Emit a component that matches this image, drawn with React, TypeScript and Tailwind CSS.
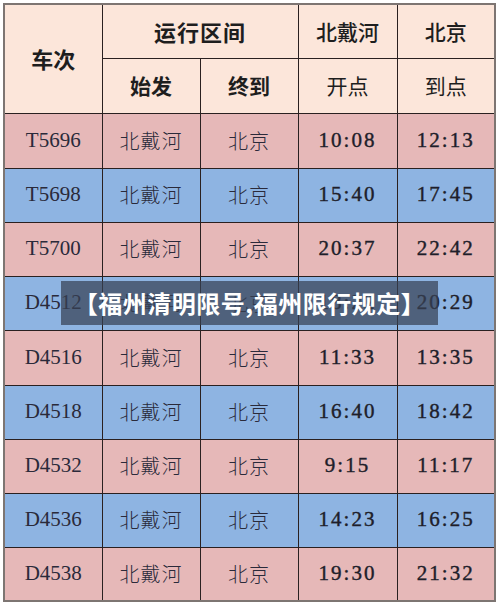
import React from "react";

const rows = [
  ["T5696", "10:08", "12:13"],
  ["T5698", "15:40", "17:45"],
  ["T5700", "20:37", "22:42"],
  ["D4512", "18:22", "20:29"],
  ["D4516", "11:33", "13:35"],
  ["D4518", "16:40", "18:42"],
  ["D4532", "9:15", "11:17"],
  ["D4536", "14:23", "16:25"],
  ["D4538", "19:30", "21:32"],
];

const sans = "font-['Noto_Sans_CJK_SC','Noto_Sans',sans-serif]";
const serif = "font-['Liberation_Serif','Noto_Sans_CJK_SC',serif]";

export default function App() {
  return (
    <div className="relative w-[500px] h-[607px] bg-white pt-[3px] pl-[3px]">
      <table className="w-[491px] table-fixed border-collapse border-2 border-[#7d7572] text-[#1e1e1e]">
        <colgroup>
          <col className="w-[98px]" />
          <col className="w-[98px]" />
          <col className="w-[98px]" />
          <col className="w-[99px]" />
          <col className="w-[98px]" />
        </colgroup>
        <thead>
          <tr className="h-[54px] bg-[#fce6da]">
            <th rowSpan={2} className={`border-[1.5px] border-[#2a2020] ${sans} font-bold text-[22px]`}>车次</th>
            <th colSpan={2} className={`border-[1.5px] border-[#2a2020] ${sans} font-bold text-[22px] tracking-[1px]`}>运行区间</th>
            <th className={`border-[1.5px] border-[#2a2020] ${sans} font-medium text-[21px]`}>北戴河</th>
            <th className={`border-[1.5px] border-[#2a2020] ${sans} font-medium text-[21px]`}>北京</th>
          </tr>
          <tr className="h-[55px] bg-[#fce6da]">
            <th className={`border-[1.5px] border-[#2a2020] ${sans} font-bold text-[21px]`}>始发</th>
            <th className={`border-[1.5px] border-[#2a2020] ${sans} font-bold text-[21px]`}>终到</th>
            <th className={`border-[1.5px] border-[#2a2020] ${sans} font-normal text-[21px]`}>开点</th>
            <th className={`border-[1.5px] border-[#2a2020] ${sans} font-normal text-[21px]`}>到点</th>
          </tr>
        </thead>
        <tbody>
          {rows.map((r, i) => (
            <tr
              key={r[0]}
              className={`${i === 0 || i === 4 ? "h-[55px]" : "h-[54px]"} ${i % 2 === 0 ? "bg-[#e6b8b8]" : "bg-[#8eb4e2]"}`}
            >
              <td className={`border-[1.5px] border-[#2a2020] text-center ${serif} text-[21px] text-[#2a2a3a]`}>{r[0]}</td>
              <td className={`border-[1.5px] border-[#2a2020] text-center ${sans} font-light text-[20px] tracking-[1px] text-[#2a2a3a]`}>北戴河</td>
              <td className={`border-[1.5px] border-[#2a2020] text-center ${sans} font-light text-[20px] tracking-[1px] text-[#2a2a3a]`}>北京</td>
              <td className={`border-[1.5px] border-[#2a2020] text-center ${serif} font-normal [-webkit-text-stroke:0.4px_#1e1e2a] text-[21px] tracking-[2px] text-[#1e1e2a]`}>{r[1]}</td>
              <td className={`border-[1.5px] border-[#2a2020] text-center ${serif} font-normal [-webkit-text-stroke:0.4px_#1e1e2a] text-[21px] tracking-[2px] text-[#1e1e2a]`}>{r[2]}</td>
            </tr>
          ))}
        </tbody>
      </table>
      <div className="absolute left-[61px] top-[281px] w-[377px] h-[44px] bg-[rgba(55,65,85,0.72)] flex items-center justify-center">
        <span className={`${sans} font-bold text-[24px] tracking-[0.5px] text-white leading-none`}>【福州清明限号,福州限行规定】</span>
      </div>
    </div>
  );
}
